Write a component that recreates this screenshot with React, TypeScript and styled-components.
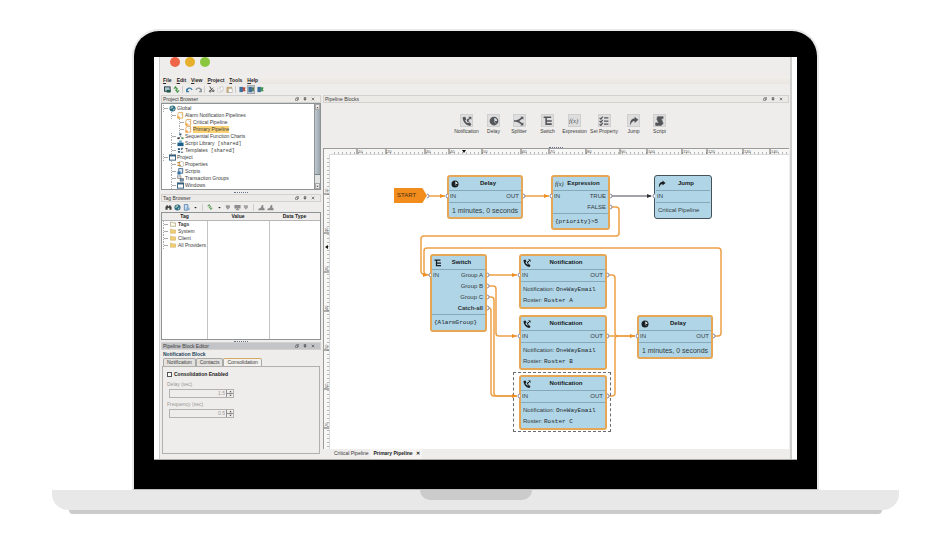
import React from "react";
import styled, { createGlobalStyle, css } from "styled-components";

const GlobalStyle = createGlobalStyle`
  * { box-sizing: border-box; }
  body { margin: 0; background: #fff; font-family: "Liberation Sans", Arial, sans-serif; font-size: 5px; line-height: 7px; color: #3c3c3c; }
  button, input { font: inherit; color: inherit; margin: 0; padding: 0; border: 0; background: none; }
  svg { display: block; flex: none; }
`;

/* ---------- laptop ---------- */

const Page = styled.main`
  padding: 29px 51px 24px 52px;
`;
const Lid = styled.div`
  margin: 0 80px;
  padding: 26px 20px 29px;
  background: #000;
  border: 2px solid #e9e9e9;
  border-bottom: 1px solid #bdbdbd;
  border-radius: 27px 27px 0 0;
`;
const Screen = styled.div`
  padding: 0 5px;
  background: #fff;
  border-bottom: 1px solid #a9aaa4;
  overflow: hidden;
`;
const Base = styled.div`
  display: flex;
  justify-content: center;
  height: 20px;
  background: #e8e8e8;
  border-radius: 0 0 16px 16px;
`;
const Notch = styled.div`
  width: 112px;
  height: 10px;
  background: #cbcbcb;
  border-radius: 0 0 12px 12px;
`;
const Foot = styled.div`
  margin: 0 17px;
  height: 4px;
  background: #cbcbcb;
  border-radius: 0 0 6px 6px;
`;

/* ---------- window chrome ---------- */

const Window = styled.div`
  display: flex;
  flex-direction: column;
  background: #eeedeb;
  border: 0 solid #cfcfcf;
  border-width: 0 2px 0 1px;
`;
const TitleBar = styled.header`
  display: flex;
  gap: 5px;
  height: 19px;
  padding-left: 10px;
`;
const Light = styled.button<{ $color: string }>`
  width: 10px;
  height: 10px;
  border-radius: 50%;
  background: ${(p) => p.$color};
`;
const MenuBar = styled.nav`
  display: flex;
  gap: 5px;
  height: 8px;
  padding-left: 3px;
  background: linear-gradient(#f1efec, #e9e5e0);
  font-weight: bold;
  color: #262626;
`;
const MenuItem = styled.button`
  line-height: 8px;
  &::first-letter { text-decoration: underline; }
`;
const ToolBar = styled.div`
  display: flex;
  align-items: center;
  gap: 1px;
  height: 10px;
  padding-left: 3px;
`;
const ToolButton = styled.button<{ $on?: boolean }>`
  display: grid;
  place-items: center;
  width: 8px;
  height: 9px;
  ${(p) => p.$on && css`background: #c9ced4; outline: 1px solid #a5abb1; outline-offset: -1px;`}
`;
const Sep = styled.span<{ $w?: number }>`
  width: 1px;
  height: 7px;
  margin: 0 ${(p) => p.$w ?? 1}px;
  background: #cfcdc9;
`;
const Workspace = styled.div`
  display: grid;
  grid-template-columns: 160px minmax(0, 1fr);
  gap: 2px;
  padding: 1px 1px 0 1px;
`;
const Column = styled.section<{ $inset?: boolean }>`
  display: flex;
  flex-direction: column;
  min-width: 0;
  padding-bottom: ${(p) => (p.$inset ? 5 : 0)}px;
`;
const DockTitle = styled.h2<{ $active?: boolean }>`
  display: flex;
  align-items: center;
  gap: 4px;
  height: 8px;
  margin: 0;
  padding: 0 5px 0 1px;
  border: 1px solid #d2d1ce;
  background: ${(p) => (p.$active ? "#c3c4c8" : "#eceae7")};
  font-size: 5px;
  font-weight: normal;
  line-height: 6px;
  span { flex: 1; }
`;
const Grip = styled.div<{ $h?: number }>`
  height: ${(p) => p.$h ?? 3}px;
  display: grid;
  place-items: center;
  &::before {
    content: "";
    width: 14px;
    border-top: 1px dotted #68718c;
  }
`;

/* ---------- project browser ---------- */

const TreeBox = styled.div`
  display: flex;
  height: 87px;
  border: 1px solid #8e9496;
  background: #fff;
`;
const Tree = styled.ul`
  flex: 1;
  margin: 0;
  padding: 1px 0 0 1px;
  list-style: none;
  overflow: hidden;
`;
const TreeItem = styled.li<{ $level: number }>`
  display: flex;
  align-items: center;
  gap: 1px;
  height: 7px;
  padding-left: ${(p) => p.$level * 8}px;
`;
const Branch = styled.span<{ $open?: boolean }>`
  width: 5px;
  height: 7px;
  border-left: 1px dotted #aaa;
  background: linear-gradient(#aaa, #aaa) 0 3px / 5px 1px no-repeat;
`;
const TreeLabel = styled.button<{ $selected?: boolean; $bold?: boolean }>`
  line-height: 7px;
  white-space: nowrap;
  font-weight: ${(p) => (p.$bold ? "bold" : "normal")};
  background: ${(p) => (p.$selected ? "#fbd375" : "none")};
  code { font-family: "Liberation Mono", monospace; font-size: 5px; }
`;
const ScrollTrack = styled.div`
  display: flex;
  flex-direction: column;
  width: 6px;
  background: #e3e3e3;
  border-left: 1px solid #8e9496;
`;
const ScrollArrow = styled.button`
  height: 6px;
  display: grid;
  place-items: center;
  background: #efeeec;
  border: 1px solid #a8a8a8;
`;
const ScrollThumb = styled.div`
  height: 65px;
  background: linear-gradient(90deg, #c0c9ce, #98a4ac);
  border-bottom: 1px solid #77838b;
  margin-bottom: auto;
`;

/* ---------- tag browser ---------- */

const TableBox = styled.div`
  flex: 1;
  display: flex;
  min-height: 126px;
  border: 1px solid #8e9496;
  background:
    linear-gradient(#c4c4c4, #c4c4c4) 45px 0 / 1px 100% no-repeat,
    linear-gradient(#c4c4c4, #c4c4c4) 107px 0 / 1px 100% no-repeat,
    #fff;
`;
const TagTable = styled.table`
  width: 100%;
  align-self: flex-start;
  table-layout: fixed;
  border-collapse: collapse;
  th { height: 7px; padding: 0; background: #eeedeb; border-bottom: 1px solid #b5b5b5; color: #222; line-height: 6px; }
  td { height: 7px; padding: 0; }
  th:first-child { width: 45px; }
  th:nth-child(2) { width: 62px; }
`;
const TagCell = styled.span`
  display: flex;
  align-items: center;
  gap: 2px;
  height: 7px;
  padding-left: 1px;
`;

/* ---------- block editor ---------- */

const BlockName = styled.h3`
  margin: 0;
  padding-left: 2px;
  font-size: 5px;
  line-height: 8px;
  color: #24445c;
`;
const Tabs = styled.div`
  display: flex;
  height: 8px;
  padding-left: 2px;
`;
const Tab = styled.button<{ $active?: boolean }>`
  padding: 0 3px;
  border: 1px solid #a9a9a6;
  border-bottom: 0;
  border-radius: 2px 2px 0 0;
  background: ${(p) => (p.$active ? "#f3f1ed" : "#e4e2df")};
  ${(p) => p.$active && css`border-top-color: #d7a865;`}
`;
const TabPanel = styled.form`
  display: flex;
  flex-direction: column;
  height: 88px;
  margin: 0 1px;
  padding: 4px;
  border: 1px solid #b1b0ad;
`;
const CheckLabel = styled.label`
  display: flex;
  align-items: center;
  gap: 2px;
  height: 7px;
  margin-bottom: 3px;
  font-weight: bold;
  color: #222;
  input { appearance: none; width: 5px; height: 5px; border: 1px solid #555; background: #fff; }
`;
const FieldLabel = styled.label`
  line-height: 7px;
  color: #9a9996;
`;
const Spinner = styled.div`
  display: flex;
  width: 65px;
  height: 9px;
  margin: 1px 0 3px 2px;
  border: 1px solid #b3b2ae;
  input { flex: 1; width: 0; text-align: right; padding-right: 1px; color: #9a9996; }
`;
const SpinButtons = styled.span`
  display: grid;
  width: 7px;
  border-left: 1px solid #8f8f8f;
  button { display: grid; place-items: center; border: 0 solid #8f8f8f; }
  button + button { border-top-width: 1px; }
`;

/* ---------- palette and editor ---------- */

const Palette = styled.div`
  display: grid;
  grid-template-columns: 28px 26px 25px 32px 22px 37px 22px 30px;
  justify-content: center;
  align-items: center;
  height: 43px;
  padding-left: 15px;
`;
const PaletteItem = styled.button`
  display: flex;
  flex-direction: column;
  align-items: center;
  gap: 1px;
  line-height: 7px;
  white-space: nowrap;
`;
const PaletteIcon = styled.span`
  display: grid;
  place-items: center;
  width: 13px;
  height: 13px;
  background: #dededf;
  border: 1px solid #cfcfd0;
`;
const Editor = styled.div`
  display: grid;
  grid-template: 5px minmax(295px, 1fr) / 5px minmax(0, 1fr);
  border-top: 1px solid #9b9b9b;
  border-left: 1px solid #9b9b9b;
  background: #f7f7f6;
  overflow: hidden;
`;
const RulerTop = styled.svg`
  grid-column: 1 / 3;
  width: 100%;
  height: 5px;
`;
const RulerLeft = styled.svg`
  width: 5px;
  height: 100%;
`;
const Canvas = styled.div`
  position: relative;
  background: #fff;
  overflow: hidden;
  border-top: 1px solid #d9d9d9;
  border-left: 1px solid #d9d9d9;
`;
const Wires = styled.svg`
  position: absolute;
  left: 0;
  top: 0;
`;
const Node = styled.article<{ $x: number; $y: number; $w: number; $h: number; $dark?: boolean }>`
  position: absolute;
  left: ${(p) => p.$x}px;
  top: ${(p) => p.$y}px;
  width: ${(p) => p.$w}px;
  min-height: ${(p) => p.$h}px;
  display: flex;
  flex-direction: column;
  border: ${(p) => (p.$dark ? "1px solid #46525a" : "2px solid #e5a755")};
  padding: ${(p) => (p.$dark ? 1 : 0)}px;
  border-radius: 3px;
  background: #b0d5e6;
  color: #333c42;
  font-size: 6px;
  line-height: 11px;
  white-space: nowrap;
`;
const NodeHead = styled.header`
  display: grid;
  grid-template-columns: 10px 1fr 6px;
  align-items: center;
  height: 14px;
  padding-left: 2px;
  border-bottom: 1px solid #86a9ba;
  font-weight: bold;
  text-align: center;
  color: #16191b;
`;
const PortRows = styled.div`
  display: flex;
  justify-content: space-between;
  padding: 0 2px 0 1px;
  border-bottom: 1px solid #86a9ba;
`;
const Outs = styled.div`
  display: flex;
  flex-direction: column;
  align-items: flex-end;
`;
const NodeBody = styled.div<{ $center?: boolean }>`
  flex: 1;
  display: flex;
  flex-direction: column;
  justify-content: center;
  padding: 0 2px;
  font-size: ${(p) => (p.$center ? 7 : 6)}px;
  align-items: ${(p) => (p.$center ? "center" : "flex-start")};
  code { font: 6px/11px "Liberation Mono", monospace; color: #20272b; }
`;
const Start = styled.div`
  position: absolute;
  left: 64px;
  top: 33px;
  width: 33px;
  height: 15px;
  padding-left: 3px;
  background: #f28c1d;
  clip-path: polygon(0 0, 86% 0, 100% 50%, 86% 100%, 0 100%);
  font-size: 6px;
  line-height: 15px;
  color: #4a2f10;
`;
const Selection = styled.div`
  position: absolute;
  left: 183px;
  top: 217px;
  width: 98px;
  height: 60px;
  border: 1px dashed #6c6c6c;
`;
const FileTabs = styled.footer`
  display: flex;
  align-items: center;
  height: 10px;
  padding-left: 8px;
`;
const FileTab = styled.button<{ $active?: boolean }>`
  display: flex;
  gap: 3px;
  height: 10px;
  padding: 0 2px 0 3px;
  line-height: 9px;
  ${(p) => p.$active && css`font-weight: bold; background: #f5f4f2; color: #222;`}
`;

/* ---------- icons ---------- */

type IconProps = { name: string; size?: number; color?: string };

function Icon({ name, size = 7, color = "#444" }: IconProps) {
  const line = { fill: "none", stroke: color, strokeWidth: 2 };
  const art: Record<string, React.ReactNode> = {
    globe: <><circle cx="8" cy="8" r="7" fill="#2e6b86" /><path d="M4 4l4-2 2 3-3 3-4 1zM9 9l4-1-2 5-2-1z" fill="#9dc3b0" /></>,
    pipeline: <><path d="M4 1h9v13H2V5z" fill="#fff" stroke="#d9902c" strokeWidth="1.6" /><path d="M1 10h5v5H1z" fill="#f0a440" /><path d="M8 4l4 3" stroke="#999" /></>,
    chart: <><path d="M8 4v4M8 8L4 12M8 8l5 4" stroke="#555" /><rect x="5" y="1" width="5" height="4" fill="#2b5d80" /><rect x="1" y="10" width="5" height="4" fill="#333" /><rect x="10" y="10" width="5" height="4" fill="#4c9a58" /></>,
    library: <><path d="M5 1h6v5H5z" fill="#6ba8c8" /><path d="M1 6h14v8H1z" fill="#1e5f8c" /></>,
    template: <><path d="M2 3h5v4H2zM2 9h5v4H2z" fill="#2c5c7d" /><path d="M9 3h5M9 6h3M9 12h5" stroke="#345" strokeWidth="2" /></>,
    window: <><rect x="1" y="2" width="14" height="12" fill="#fff" stroke="#2b5674" strokeWidth="2" /><path d="M1 4h14" stroke="#2b5674" strokeWidth="3" /></>,
    props: <><rect x="6" y="2" width="8" height="11" fill="#fff" stroke="#777" /><path d="M1 4h6M1 10h8" stroke="#c58a34" strokeWidth="3" /></>,
    scripts: <><path d="M4 1h9v11H4z" fill="#d6e6f4" stroke="#3a6488" strokeWidth="2" /><path d="M1 8h7v7H1z" fill="#3470a0" /></>,
    groups: <><rect x="1" y="2" width="8" height="6" fill="#ddd" stroke="#555" /><rect x="7" y="8" width="8" height="6" fill="#6f95b4" stroke="#444" /></>,
    folder: <path d="M1 3h5l2 2h7v9H1z" fill="#f1cf76" stroke="#b8913c" />,
    page: <path d="M1 3h5l2 2h7v9H1z" fill="#fffbe9" stroke="#a99e7c" strokeWidth="2" />,
    save: <><rect x="1" y="2" width="13" height="10" fill="#a8c6c9" stroke="#234" strokeWidth="2" /><path d="M6 9h9v6H6z" fill="#25594c" /></>,
    refresh: <path d="M2 6l4-4 2 4 3 1M14 10l-4 4-2-4-3-1" {...line} strokeWidth="3" />,
    undo: <path d="M2 12c1-9 9-9 12-3M1 6v7h6" {...line} strokeWidth="3" />,
    redo: <path d="M14 12c-1-9-9-9-12-3M15 6v7H9" {...line} strokeWidth="3" />,
    cut: <><path d="M4 1l5 9M11 4L6 10" {...line} /><circle cx="5" cy="12" r="2" {...line} /><circle cx="12" cy="11" r="2" {...line} /></>,
    copy: <><path d="M2 5h7v9H2z" fill="#fff" stroke="#aaa" /><path d="M7 2h7v9H7z" fill="#fafafa" stroke="#aaa" /></>,
    paste: <><path d="M2 3h11v12H2z" fill="#d8bb80" stroke="#927236" /><path d="M6 6h8v9H6z" fill="#fff" stroke="#999" /></>,
    comm: <><rect x="1" y="2" width="8" height="12" fill="#3a6f9c" /><path d="M9 3l5 9M14 3L9 12" stroke={color} strokeWidth="3" /></>,
    binoculars: <path d="M1 13V7l3-4h2l2 3 2-3h2l3 4v6h-5V9H6v4z" fill={color} />,
    tagpage: <><path d="M3 1h8v13H3z" fill="#c9def0" stroke="#5b86ad" strokeWidth="2" /><path d="M8 8h7v6H8z" fill="#82aacb" /></>,
    caret: <path d="M4 6h8l-4 5z" fill="#222" />,
    blob: <path d="M2 3h11v6l-4 5H6L2 8z" fill={color} />,
    monitor: <path d="M1 2h14v8H9v2h3v2H4v-2h3v-2H1z" fill={color} />,
    person: <path d="M9 2h3v6l3 2v4H1v-3l5-2z" fill={color} />,
    notification: <><path d="M1 2l4-1 2 4-2 2c1 2 2 3 4 4l3-1 3 3-2 3C6 15 1 9 1 2z" fill={color} /><path d="M8 8l5-5" {...line} /><path d="M10 1h5v5zM8 4v5h4z" fill={color} /></>,
    delay: <><circle cx="8" cy="8" r="7" fill={color} /><path d="M8 3c3 0 5 2 5 5H9z" fill="#d9e6ec" /><path d="M8 8l3 4" stroke="#d9e6ec" strokeWidth="1" /></>,
    splitter: <><path d="M0 8h6M6 8l7-5M6 8l7 5" {...line} strokeWidth="2.5" /><circle cx="6" cy="8" r="2" fill={color} /><path d="M10 1h5v5zM15 10v5h-5z" fill={color} /></>,
    switch: <path d="M1 2h12M5 2v11h9M5 8h9" {...line} strokeWidth="2.5" />,
    checklist: <path d="M1 3l2 2 3-4M1 8l2 2 3-4M1 13l2 2 3-4M8 3h7M8 8h7M8 13h7" {...line} />,
    jump: <path d="M2 15C1 8 4 4 9 4V1l6 5-6 5V8C6 8 4 10 2 15z" fill={color} />,
    script: <path d="M4 1h9v3h-3l3 8-3 3H1v-4h5L3 5z" fill={color} stroke={color} />,
    float: <path d="M5 2h9v8H9M2 6h8v8H2z" {...line} strokeWidth="2" />,
    pin: <path d="M5 2h6v7H5zM3 9h10M8 9v6" {...line} strokeWidth="2.5" />,
    close: <path d="M3 3l10 10M13 3L3 13" {...line} strokeWidth="2.5" />,
    up: <path d="M8 4l6 8H2z" fill={color} />,
    down: <path d="M8 12L2 4h12z" fill={color} />,
  };
  if (name === "fx") {
    return (
      <svg width={size + 2} height={size} viewBox="0 0 13 10" aria-hidden="true">
        <text x="0" y="8" fontFamily="Liberation Serif, serif" fontStyle="italic" fontWeight="normal" fontSize="8" fill={color}>f(x)</text>
      </svg>
    );
  }
  return <svg width={size} height={size} viewBox="0 0 16 16" aria-hidden="true">{art[name]}</svg>;
}

function Dock({ title, active }: { title: string; active?: boolean }) {
  return (
    <DockTitle $active={active}>
      <span>{title}</span>
      {["float", "pin", "close"].map((n) => (
        <button key={n} aria-label={n}><Icon name={n} size={4} /></button>
      ))}
    </DockTitle>
  );
}

/* ---------- data ---------- */

type TreeRow = { level: number; icon: string; label: string; shared?: boolean; selected?: boolean };
const projectTree: TreeRow[] = [
  { level: 0, icon: "globe", label: "Global" },
  { level: 1, icon: "pipeline", label: "Alarm Notification Pipelines" },
  { level: 2, icon: "pipeline", label: "Critical Pipeline" },
  { level: 2, icon: "pipeline", label: "Primary Pipeline", selected: true },
  { level: 1, icon: "chart", label: "Sequential Function Charts" },
  { level: 1, icon: "library", label: "Script Library", shared: true },
  { level: 1, icon: "template", label: "Templates", shared: true },
  { level: 0, icon: "window", label: "Project" },
  { level: 1, icon: "props", label: "Properties" },
  { level: 1, icon: "scripts", label: "Scripts" },
  { level: 1, icon: "groups", label: "Transaction Groups" },
  { level: 1, icon: "window", label: "Windows" },
  { level: 1, icon: "template", label: "Templates" },
];

const palette = [
  ["notification", "Notification"], ["delay", "Delay"], ["splitter", "Splitter"], ["switch", "Switch"],
  ["fx", "Expression"], ["checklist", "Set Property"], ["jump", "Jump"], ["script", "Script"],
];

type Block = {
  x: number; y: number; w: number; h: number; icon: string; title: string;
  outs: string[]; body: React.ReactNode; center?: boolean; dark?: boolean;
};
const roster = (r: string) => (
  <><span>Notification: <code>OneWayEmail</code></span><span>Roster: <code>Roster {r}</code></span></>
);
const blocks: Block[] = [
  { x: 117, y: 20, w: 76, h: 44, icon: "delay", title: "Delay", outs: ["OUT"], body: "1 minutes, 0 seconds", center: true },
  { x: 221, y: 20, w: 59, h: 55, icon: "fx", title: "Expression", outs: ["TRUE", "FALSE"], body: <code>{"{priority}>5"}</code> },
  { x: 324, y: 20, w: 58, h: 44, icon: "jump", title: "Jump", outs: [], body: "Critical Pipeline", dark: true },
  { x: 100, y: 99, w: 57, h: 78, icon: "switch", title: "Switch", outs: ["Group A", "Group B", "Group C", "Catch-all"], body: <code>{"{AlarmGroup}"}</code> },
  { x: 189, y: 99, w: 88, h: 55, icon: "notification", title: "Notification", outs: ["OUT"], body: roster("A") },
  { x: 189, y: 160, w: 88, h: 55, icon: "notification", title: "Notification", outs: ["OUT"], body: roster("B") },
  { x: 189, y: 220, w: 88, h: 55, icon: "notification", title: "Notification", outs: ["OUT"], body: roster("C") },
  { x: 307, y: 160, w: 76, h: 44, icon: "delay", title: "Delay", outs: ["OUT"], body: "1 minutes, 0 seconds", center: true },
];

const wires = [
  "M99 41H115", "M194 41H219",
  "M281 52H286Q289 52 289 55V78Q289 81 286 81H94Q91 81 91 84V116Q91 120 97 120",
  "M385 181H388Q391 181 391 178V96Q391 93 388 93H97Q94 93 94 96V116Q94 120 99 120",
  "M159 120H187", "M159 131H163Q166 131 166 134V178Q166 181 169 181H187",
  "M159 142H161Q164 142 164 145V238Q164 241 167 241H187",
  "M159 153Q161 153 161 156V238Q161 241 164 241H187",
  "M279 120H282Q285 120 285 123V178Q285 181 288 181H305",
  "M279 241H282Q285 241 285 238V184Q285 181 288 181", "M279 181H305",
];
const inPorts = [[116, 41], [220, 41], [323, 41], [99, 120], [188, 120], [188, 181], [188, 241], [306, 181]];
const outPorts = [[98, 41], [194, 41], [281, 41], [281, 52], [158, 120], [158, 131], [158, 142], [158, 153], [278, 120], [278, 181], [278, 241], [384, 181]];

const rulerMarks = [33, 62, 101, 125, 158, 197, 225, 262, 296, 323, 358, 383, 419, 446];
const sideMarks = [40, 79, 118, 157, 196, 235, 274];

function Pipeline() {
  return (
    <Canvas>
      <Wires width="450" height="290" viewBox="0 0 450 290" aria-hidden="true">
        <g fill="none" stroke="#eda046" strokeWidth="1.5">{wires.map((d) => <path key={d} d={d} />)}</g>
        <path d="M282 41H321" stroke="#484850" />
      </Wires>
      <Start>START</Start>
      {blocks.map((b, i) => (
        <Node key={i} $x={b.x} $y={b.y} $w={b.w} $h={b.h} $dark={b.dark}>
          <NodeHead><Icon name={b.icon} size={8} color="#1b1f22" /><span>{b.title}</span></NodeHead>
          <PortRows>
            <span>IN</span>
            <Outs>{b.outs.map((o) => (o === "Catch-all" ? <b key={o}>{o}</b> : <span key={o}>{o}</span>))}</Outs>
          </PortRows>
          <NodeBody $center={b.center}>{b.body}</NodeBody>
        </Node>
      ))}
      <Selection />
      <Wires width="450" height="290" viewBox="0 0 450 290" aria-hidden="true">
        {inPorts.map(([x, y], i) => (
          <g key={`${x}-${y}`}>
            <path d={`M${x - 6} ${y - 2}l5 2l-5 2z`} fill={i === 2 ? "#33333b" : "#ee8f26"} />
            <path d={`M${x + 2} ${y - 2}a2 2 0 0 0 0 4`} fill="#fff" stroke="#8b86a0" />
          </g>
        ))}
        {outPorts.map(([x, y]) => (
          <path key={`${x}-${y}`} d={`M${x - 1} ${y - 2}a2 2 0 0 1 0 4`} fill="#fff" stroke="#8b86a0" />
        ))}
      </Wires>
    </Canvas>
  );
}

export default function App() {
  return (
    <Page>
      <GlobalStyle />
      <Lid>
        <Screen>
          <Window>
            <TitleBar>
              <Light $color="#ee6547" aria-label="Close" />
              <Light $color="#e6b02d" aria-label="Minimize" />
              <Light $color="#8bc63f" aria-label="Zoom" />
            </TitleBar>
            <MenuBar>
              {["File", "Edit", "View", "Project", "Tools", "Help"].map((m) => <MenuItem key={m}>{m}</MenuItem>)}
            </MenuBar>
            <ToolBar>
              <ToolButton aria-label="Save"><Icon name="save" /></ToolButton>
              <ToolButton aria-label="Refresh"><Icon name="refresh" color="#4a9a4c" /></ToolButton>
              <Sep />
              <ToolButton aria-label="Undo"><Icon name="undo" color="#3f7fa8" /></ToolButton>
              <ToolButton aria-label="Redo"><Icon name="redo" color="#8d979c" /></ToolButton>
              <Sep />
              <ToolButton aria-label="Cut"><Icon name="cut" /></ToolButton>
              <ToolButton aria-label="Copy"><Icon name="copy" /></ToolButton>
              <ToolButton aria-label="Paste"><Icon name="paste" /></ToolButton>
              <Sep />
              <ToolButton aria-label="Comm off"><Icon name="comm" color="#b5483e" /></ToolButton>
              <ToolButton aria-label="Comm read" $on><Icon name="comm" color="#547a5a" /></ToolButton>
              <ToolButton aria-label="Comm read/write"><Icon name="comm" color="#3c9148" /></ToolButton>
            </ToolBar>
            <Workspace>
              <Column $inset>
                <Dock title="Project Browser" />
                <TreeBox>
                  <Tree>
                    {projectTree.map((r, i) => (
                      <TreeItem key={i} $level={r.level}>
                        <Branch />
                        <Icon name={r.icon} size={7} />
                        <TreeLabel $selected={r.selected}>{r.label}{r.shared && <code> [shared]</code>}</TreeLabel>
                      </TreeItem>
                    ))}
                  </Tree>
                  <ScrollTrack>
                    <ScrollArrow aria-label="Scroll up"><Icon name="up" size={3} /></ScrollArrow>
                    <ScrollThumb />
                    <ScrollArrow aria-label="Scroll down"><Icon name="down" size={3} /></ScrollArrow>
                  </ScrollTrack>
                </TreeBox>
                <Grip $h={4} />
                <Dock title="Tag Browser" />
                <ToolBar>
                  <ToolButton aria-label="Find"><Icon name="binoculars" /></ToolButton>
                  <ToolButton aria-label="Connections"><Icon name="globe" /></ToolButton>
                  <ToolButton aria-label="New tag"><Icon name="tagpage" /></ToolButton>
                  <ToolButton aria-label="New tag options"><Icon name="caret" size={5} /></ToolButton>
                  <Sep $w={2} />
                  <ToolButton aria-label="Run"><Icon name="refresh" size={6} color="#73a96c" /></ToolButton>
                  <ToolButton aria-label="Run options"><Icon name="caret" size={5} /></ToolButton>
                  <ToolButton aria-label="Edit"><Icon name="blob" size={6} color="#9b9b9b" /></ToolButton>
                  <ToolButton aria-label="Monitor"><Icon name="monitor" color="#8d8d8d" /></ToolButton>
                  <ToolButton aria-label="Remove"><Icon name="blob" size={6} color="#a3a3a3" /></ToolButton>
                  <Sep $w={2} />
                  <ToolButton aria-label="Import"><Icon name="person" color="#8a8a8a" /></ToolButton>
                  <ToolButton aria-label="Export"><Icon name="person" color="#8a8a8a" /></ToolButton>
                </ToolBar>
                <TableBox>
                  <TagTable>
                    <thead><tr><th>Tag</th><th>Value</th><th>Data Type</th></tr></thead>
                    <tbody>
                      {["Tags", "System", "Client", "All Providers"].map((t, i) => (
                        <tr key={t}>
                          <td><TagCell><Branch /><Icon name={i ? "folder" : "page"} size={6} /><TreeLabel $bold={!i}>{t}</TreeLabel></TagCell></td>
                          <td /><td />
                        </tr>
                      ))}
                    </tbody>
                  </TagTable>
                </TableBox>
                <Grip $h={2} />
                <Dock title="Pipeline Block Editor" active />
                <BlockName>Notification Block</BlockName>
                <Tabs role="tablist">
                  <Tab role="tab">Notification</Tab>
                  <Tab role="tab">Contacts</Tab>
                  <Tab role="tab" $active aria-selected>Consolidation</Tab>
                </Tabs>
                <TabPanel>
                  <CheckLabel><input type="checkbox" />Consolidation Enabled</CheckLabel>
                  <FieldLabel htmlFor="delay">Delay (sec)</FieldLabel>
                  <Spinner>
                    <input id="delay" defaultValue="1.5" disabled />
                    <SpinButtons><button type="button" aria-label="Increase delay"><Icon name="up" size={3} /></button><button type="button" aria-label="Decrease delay"><Icon name="down" size={3} /></button></SpinButtons>
                  </Spinner>
                  <FieldLabel htmlFor="frequency">Frequency (sec)</FieldLabel>
                  <Spinner>
                    <input id="frequency" defaultValue="0.5" disabled />
                    <SpinButtons><button type="button" aria-label="Increase frequency"><Icon name="up" size={3} /></button><button type="button" aria-label="Decrease frequency"><Icon name="down" size={3} /></button></SpinButtons>
                  </Spinner>
                </TabPanel>
              </Column>
              <Column>
                <Dock title="Pipeline Blocks" />
                <Palette>
                  {palette.map(([icon, label]) => (
                    <PaletteItem key={label}>
                      <PaletteIcon><Icon name={icon} size={icon === "fx" ? 9 : 10} color="#55565a" /></PaletteIcon>
                      {label}
                    </PaletteItem>
                  ))}
                </Palette>
                <Grip $h={2} />
                <Editor>
                  <RulerTop aria-hidden="true">
                    <path d="M10 4H1200" stroke="#77777a" strokeDasharray="1 3" />
                    {rulerMarks.map((x, i) => (
                      <g key={x}>
                        <path d={`M${x} 0V5`} stroke="#666" />
                        <text x={x + 1} y="4" fontSize="4" fill="#555">{(i + 1) * 10}</text>
                      </g>
                    ))}
                    <path d="M138 1h4l-2 3z" fill="#111" />
                  </RulerTop>
                  <RulerLeft aria-hidden="true">
                    <path d="M4 4V1200" stroke="#77777a" strokeDasharray="1 3" />
                    {sideMarks.map((y, i) => (
                      <g key={y}>
                        <path d={`M0 ${y}H5`} stroke="#666" />
                        <text transform={`translate(4 ${y - 1}) rotate(-90)`} fontSize="4" fill="#555">{(i + 1) * 10}</text>
                      </g>
                    ))}
                    <path d="M1 93l3-2v4z" fill="#111" />
                  </RulerLeft>
                  <Pipeline />
                </Editor>
                <FileTabs>
                  <FileTab>Critical Pipeline</FileTab>
                  <FileTab $active>Primary Pipeline <span>✕</span></FileTab>
                </FileTabs>
              </Column>
            </Workspace>
          </Window>
        </Screen>
      </Lid>
      <Base><Notch /></Base>
      <Foot />
    </Page>
  );
}
